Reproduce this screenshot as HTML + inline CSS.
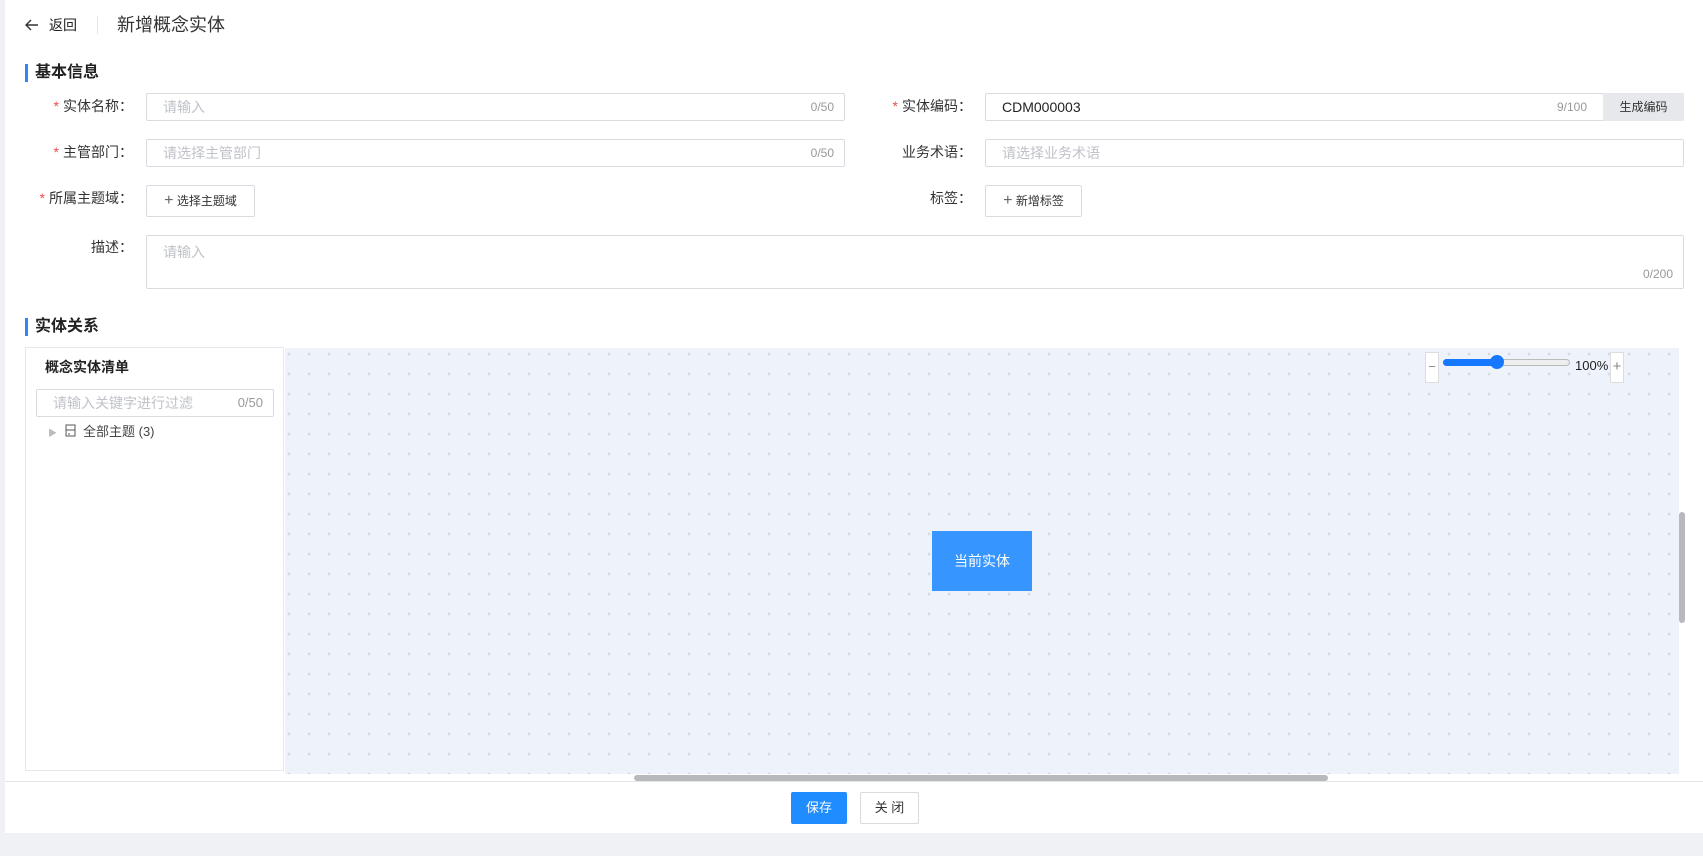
<!DOCTYPE html>
<html><head><meta charset="utf-8"><style>
*{box-sizing:border-box;margin:0;padding:0}
body{width:1703px;height:856px;background:#f0f1f4;font-family:"Liberation Sans","Noto Sans CJK SC",sans-serif;position:relative;overflow:hidden;color:#333}
.main{position:absolute;left:5px;top:0;width:1698px;height:833px;background:#fff}
.a{position:absolute}
.lbl{position:absolute;font-size:14px;color:#333;text-align:right;width:128px;line-height:27px}
.lbl i{color:#f04a4a;font-style:normal;margin-right:4px}
.inp{position:absolute;border:1px solid #d9dbe0;border-radius:2px;height:28px;font-size:14px;line-height:26px;padding-left:16px;color:#bfc2c8;background:#fff}
.cnt{position:absolute;right:10px;top:0;font-size:12px;color:#999}
.btn{position:absolute;border:1px solid #d9dbe0;border-radius:2px;font-size:12px;color:#333;text-align:center;background:#fff}
.sec{position:absolute;left:25px;font-size:16px;font-weight:bold;color:#222;border-left:3px solid #2f86f6;padding-left:7px;line-height:18px}
</style></head><body>
<div class="main"></div>
<svg class="a" style="left:24px;top:17px" width="16" height="16" viewBox="0 0 16 16"><path d="M14 8H2M7 3L2 8l5 5" stroke="#333" stroke-width="1.4" fill="none"/></svg>
<div class="a" style="left:49px;top:15px;font-size:14px;line-height:20px;color:#222">返回</div>
<div class="a" style="left:97px;top:16px;width:1px;height:18px;background:#e5e5e5"></div>
<div class="a" style="left:117px;top:12px;font-size:18px;line-height:26px;color:#333">新增概念实体</div>

<div class="sec" style="top:64px">基本信息</div>
<div class="lbl" style="left:5px;top:93px"><i>*</i>实体名称：</div>
<div class="inp" style="left:146px;top:93px;width:699px">请输入<span class="cnt">0/50</span></div>
<div class="lbl" style="left:844px;top:93px"><i>*</i>实体编码：</div>
<div class="inp" style="left:985px;top:93px;width:699px;color:#222">CDM000003<span class="cnt" style="right:96px">9/100</span></div>
<div class="a" style="left:1603px;top:93px;width:81px;height:28px;background:#e6e8ec;font-size:12px;color:#333;text-align:center;line-height:28px;border-radius:0 2px 2px 0">生成编码</div>

<div class="lbl" style="left:5px;top:139px"><i>*</i>主管部门：</div>
<div class="inp" style="left:146px;top:139px;width:699px">请选择主管部门<span class="cnt">0/50</span></div>
<div class="lbl" style="left:844px;top:139px">业务术语：</div>
<div class="inp" style="left:985px;top:139px;width:699px">请选择业务术语</div>

<div class="lbl" style="left:5px;top:185px"><i>*</i>所属主题域：</div>
<div class="btn" style="left:146px;top:185px;width:109px;height:32px;line-height:30px"><span style="font-size:16px;color:#666">+</span> 选择主题域</div>
<div class="lbl" style="left:844px;top:185px">标签：</div>
<div class="btn" style="left:985px;top:185px;width:97px;height:32px;line-height:30px"><span style="font-size:16px;color:#666">+</span> 新增标签</div>

<div class="lbl" style="left:5px;top:234px">描述：</div>
<div class="inp" style="left:146px;top:235px;width:1538px;height:54px;line-height:32px">请输入<span class="cnt" style="top:22px">0/200</span></div>

<div class="sec" style="top:318px">实体关系</div>
<div class="a" style="left:25px;top:347px;width:259px;height:424px;border:1px solid #e6e8ee;background:#fff"></div>
<div class="a" style="left:45px;top:357px;font-size:14px;font-weight:bold;color:#222;line-height:20px">概念实体清单</div>
<div class="inp" style="left:36px;top:389px;width:238px;font-size:14px">请输入关键字进行过滤<span class="cnt" style="font-size:13px">0/50</span></div>
<div class="a" style="left:48px;top:426px;font-size:9px;color:#bbb">▶</div>
<svg class="a" style="left:65px;top:424px" width="12" height="13"><rect x="1" y="1" width="9" height="11" fill="none" stroke="#555"/><path d="M1 6h9M4 9v2" stroke="#555"/></svg>
<div class="a" style="left:83px;top:423px;font-size:13px;color:#444;line-height:18px">全部主题 (3)</div>

<div class="a" style="left:285px;top:348px;width:1394px;height:426px;background-color:#edf2fb;background-image:radial-gradient(circle,#d5d9e2 1.2px,transparent 1.6px);background-size:20px 20px;background-position:-6px -4px"></div>
<div class="a" style="left:932px;top:531px;width:100px;height:60px;background:#3795ff;color:#fff;font-size:14px;text-align:center;line-height:60px">当前实体</div>
<div class="a" style="left:1425px;top:352px;width:14px;height:31px;background:#fff;border:1px solid #ddd;font-size:13px;color:#888;text-align:center;line-height:28px">−</div>
<div class="a" style="left:1443px;top:359px;width:127px;height:7px;border:1px solid #bbb;border-radius:4px;background:#eee"></div>
<div class="a" style="left:1443px;top:359px;width:56px;height:7px;border-radius:4px;background:#1677ff"></div>
<div class="a" style="left:1490px;top:355px;width:14px;height:14px;border-radius:50%;background:#1677ff"></div>
<div class="a" style="left:1575px;top:358px;font-size:13px;color:#222;line-height:16px">100%</div>
<div class="a" style="left:1610px;top:352px;width:14px;height:31px;background:#fff;border:1px solid #ddd;font-size:15px;color:#888;text-align:center;line-height:28px">+</div>
<div class="a" style="left:1679px;top:512px;width:6px;height:111px;border-radius:3px;background:#b8b9bd"></div>
<div class="a" style="left:634px;top:775px;width:694px;height:6px;border-radius:3px;background:#b8b9bd"></div>
<div class="a" style="left:5px;top:781px;width:1698px;height:1px;background:#e3e4e8"></div>
<div class="a" style="left:791px;top:792px;width:56px;height:32px;background:#1f8cff;color:#fff;border-radius:2px;font-size:13px;text-align:center;line-height:32px">保存</div>
<div class="btn" style="left:860px;top:792px;width:59px;height:32px;line-height:30px;font-size:13px">关 闭</div>
</body></html>
